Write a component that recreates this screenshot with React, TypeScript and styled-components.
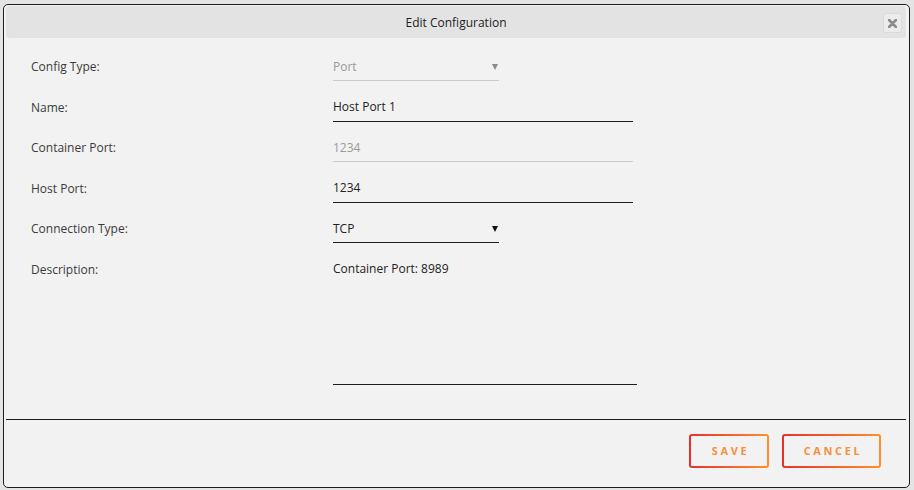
import styled, { createGlobalStyle } from 'styled-components'

const GlobalStyle = createGlobalStyle`
  body {
    margin: 0;
    background: #e4e4e4;
    font-family: "Open Sans", "Liberation Sans", sans-serif;
  }
`

const Dialog = styled.div`
  box-sizing: border-box;
  margin: 4px 0 0 3px;
  width: 907px;
  height: 484px;
  border: 1px solid #1e1e1e;
  border-radius: 5px;
  background: #f2f2f2;
  padding: 1px 3px 0 2px;
  display: flex;
  flex-direction: column;
`

const Header = styled.div`
  position: relative;
  height: 32px;
  background: #e3e3e3;
  border-radius: 4px;
  display: flex;
  align-items: center;
  justify-content: center;
  padding-top: 1px;
  box-sizing: border-box;
  font-size: 12px;
  color: #222;
`

const CloseButton = styled.div`
  position: absolute;
  right: 4px;
  top: 7px;
  box-sizing: border-box;
  width: 19px;
  height: 20px;
  border: 1px solid #dadada;
  border-radius: 3px;
  background: #ececec;
  display: flex;
  align-items: center;
  justify-content: center;
`

const Form = styled.div`
  padding: 12px 0 0 25px;
  display: flex;
  flex-direction: column;
`

const Row = styled.div<{ $tall?: boolean }>`
  display: grid;
  grid-template-columns: 302px auto;
  height: ${(p) => (p.$tall ? '132px' : '40.6px')};
  align-items: start;
`

const Label = styled.div`
  font-size: 12px;
  line-height: 33px;
  color: #3a3a3a;
`

const Field = styled.div<{ $width: number; $disabled?: boolean }>`
  box-sizing: border-box;
  width: ${(p) => p.$width}px;
  height: 31px;
  border-bottom: 1px solid ${(p) => (p.$disabled ? '#cbcbcb' : '#1e1e1e')};
  display: flex;
  align-items: center;
  justify-content: space-between;
  font-size: 12px;
  color: ${(p) => (p.$disabled ? '#9a9a9a' : '#222')};
  padding: 2px 1px 0 0;
`

const Arrow = styled.span<{ $disabled?: boolean }>`
  width: 0;
  height: 0;
  border-left: 3px solid transparent;
  border-right: 3px solid transparent;
  border-top: 6px solid ${(p) => (p.$disabled ? '#8a8a8a' : '#111')};
  margin-top: 1px;
`

const TextArea = styled.div`
  box-sizing: border-box;
  width: 304px;
  height: 132px;
  border-bottom: 1px solid #1e1e1e;
  padding-top: 8px;
  font-size: 12px;
  line-height: 16px;
  color: #222;
`

const Divider = styled.div`
  margin-top: 34px;
  height: 1px;
  background: #1e1e1e;
`

const Footer = styled.div`
  display: flex;
  justify-content: flex-end;
  gap: 13px;
  padding: 14px 25px 0 0;
`

const ActionButton = styled.button<{ $width: number }>`
  box-sizing: border-box;
  width: ${(p) => p.$width}px;
  height: 34px;
  border: 2px solid transparent;
  border-radius: 3px;
  background:
    linear-gradient(#f2f2f2, #f2f2f2) padding-box,
    linear-gradient(to right, #e5302e, #ff8f2c) border-box;
  font-family: "Open Sans", "Liberation Sans", sans-serif;
  font-size: 11px;
  font-weight: 700;
  letter-spacing: 2.6px;
  color: #f7903a;
  padding: 0 0 0 3px;
`

const rows = [
  { label: 'Config Type:', value: 'Port', select: true, disabled: true },
  { label: 'Name:', value: 'Host Port 1' },
  { label: 'Container Port:', value: '1234', disabled: true },
  { label: 'Host Port:', value: '1234' },
  { label: 'Connection Type:', value: 'TCP', select: true },
]

function App() {
  return (
    <>
      <GlobalStyle />
      <Dialog>
        <Header>
          Edit Configuration
          <CloseButton>
            <svg width="9" height="9" viewBox="0 0 9 9">
              <path d="M1 1 L8 8 M8 1 L1 8" stroke="#8c8c8c" strokeWidth="2.6" strokeLinecap="round" />
            </svg>
          </CloseButton>
        </Header>
        <Form>
          {rows.map((r) => (
            <Row key={r.label}>
              <Label>{r.label}</Label>
              <Field $width={r.select ? 166 : 300} $disabled={r.disabled}>
                {r.value}
                {r.select && <Arrow $disabled={r.disabled} />}
              </Field>
            </Row>
          ))}
          <Row $tall>
            <Label>Description:</Label>
            <TextArea>Container Port: 8989</TextArea>
          </Row>
        </Form>
        <Divider />
        <Footer>
          <ActionButton $width={80}>SAVE</ActionButton>
          <ActionButton $width={99}>CANCEL</ActionButton>
        </Footer>
      </Dialog>
    </>
  )
}

export default App
